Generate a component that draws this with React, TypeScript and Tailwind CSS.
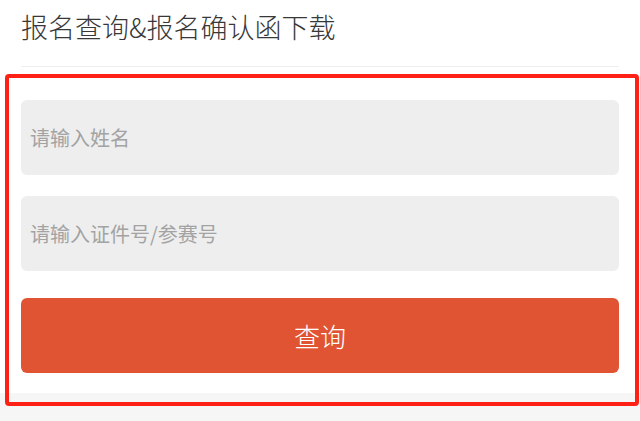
import React from "react";

export default function App() {
  const font = { fontFamily: '"Noto Sans CJK SC", "Noto Sans", sans-serif' };
  return (
    <div className="relative w-[640px] h-[421px] bg-[#f6f6f6] overflow-hidden" style={font}>
      <div className="bg-white h-[393px] flex flex-col">
        <div className="h-[66px] px-[21px] pt-[13px]">
          <h1 className="text-[27px] leading-[27px] text-[#383838] font-light">报名查询&amp;报名确认函下载</h1>
        </div>
        <div className="mx-[21px] h-px bg-[#eeeeee]" />
        <div className="px-[21px] pt-[33px] flex flex-col">
          <input
            className="h-[75px] rounded-[6px] bg-[#eeeeee] px-[9px] text-[20px] text-[#333] placeholder:text-[#a3a3a3] outline-none"
            placeholder="请输入姓名"
          />
          <input
            className="mt-[21px] h-[75px] rounded-[6px] bg-[#eeeeee] px-[9px] text-[20px] text-[#333] placeholder:text-[#a3a3a3] outline-none"
            placeholder="请输入证件号/参赛号"
          />
          <button className="mt-[27px] h-[75px] rounded-[6px] bg-[#e05433] text-white text-[26px] font-light">
            查询
          </button>
        </div>
      </div>
      <div className="absolute left-[5px] top-[74px] w-[634px] h-[332px] border-[4px] border-[#ff2116] rounded-[4px] pointer-events-none" />
    </div>
  );
}
